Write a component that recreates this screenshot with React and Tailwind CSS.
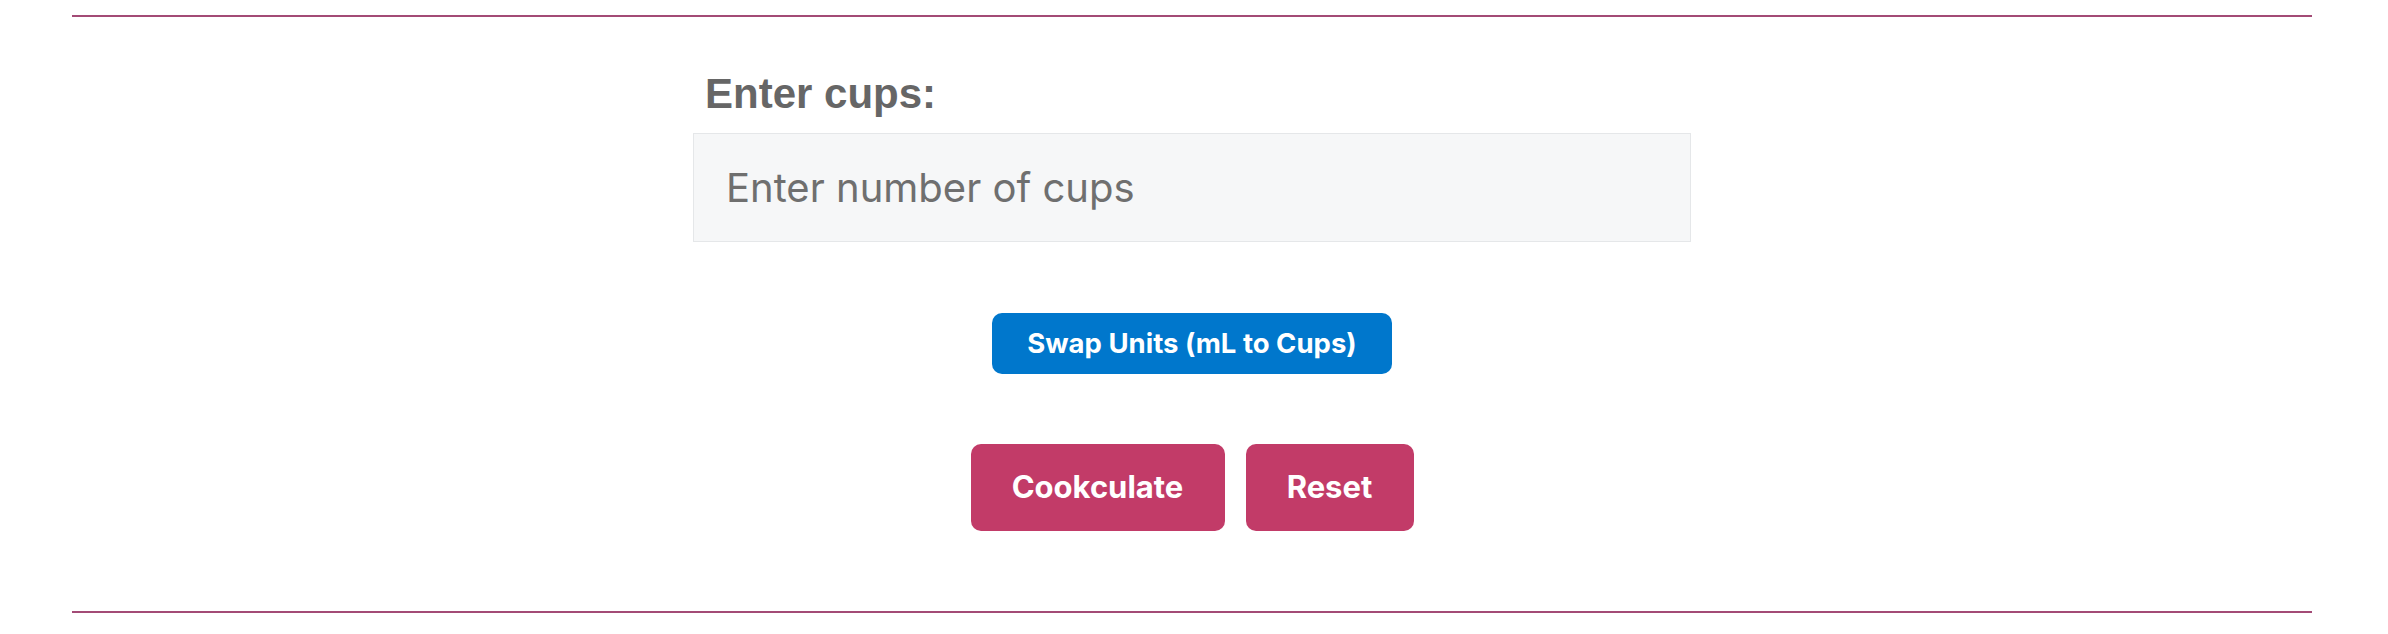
import { useState } from 'react';

export default function App() {
  const [cups, setCups] = useState('');

  return (
    <div className="min-h-screen bg-white pl-[72px] pr-[76px] pt-[15px]">
      <div className="border-t-2 border-[#a34b76]" />

      <div className="w-[998px] mx-auto pt-[53px]">
        {/* Input label */}
        <label
          htmlFor="cups"
          className="block pl-[12px] text-[42px] leading-[48px] font-bold text-[#666666] font-['Liberation_Sans',Arial,sans-serif]"
        >
          Enter cups:
        </label>
        <input
          id="cups"
          type="text"
          placeholder="Enter number of cups"
          value={cups}
          onChange={(e) => setCups(e.target.value)}
          className="mt-[15px] w-full h-[109px] bg-[#f6f7f8] border border-[#e5e7e9] px-[32px] text-[40px] text-[#333] placeholder:text-[#6f6f6f] outline-none font-['Inter',sans-serif]"
        />

        {/* Swap */}
        <div className="flex justify-center mt-[71px]">
          <button className="w-[400px] h-[61px] rounded-[10px] bg-[#0077cc] text-white text-[27.5px] font-bold font-['Inter',sans-serif]">
            Swap Units (mL to Cups)
          </button>
        </div>

        {/* Actions */}
        <div className="flex justify-center gap-[21px] mt-[70px]">
          <button className="w-[254px] h-[87px] rounded-[10px] bg-[#c23b68] text-white text-[31px] font-bold font-['Inter',sans-serif]">
            Cookculate
          </button>
          <button className="w-[168px] h-[87px] rounded-[10px] bg-[#c23b68] text-white text-[31px] font-bold font-['Inter',sans-serif]">
            Reset
          </button>
        </div>
      </div>

      <div className="mt-[80px] border-t-2 border-[#a34b76]" />
    </div>
  );
}
